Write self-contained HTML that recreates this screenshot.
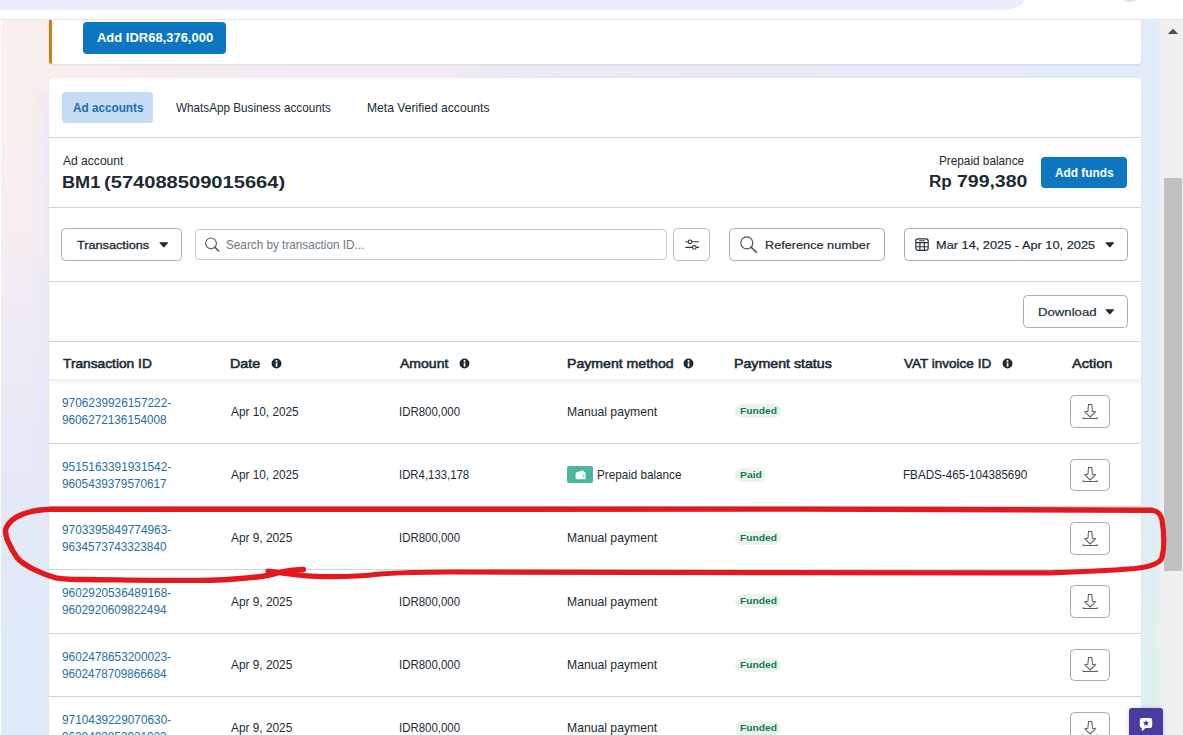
<!DOCTYPE html>
<html>
<head>
<meta charset="utf-8">
<title>Billing</title>
<style>
*{box-sizing:border-box;margin:0;padding:0}
html,body{width:1183px;height:735px;overflow:hidden}
body{font-family:"Liberation Sans",sans-serif;color:#1c2b33;font-size:13px;position:relative;background:#e9eaf7}
.abs{position:absolute}
.t{position:absolute;white-space:nowrap;line-height:1;transform-origin:0 50%}
.line{position:absolute;left:49px;width:1092px;height:1px;background:#d0d4d9}
.btn{position:absolute;border:1px solid #a9afb6;border-radius:4.5px;background:#fff}
.blue{position:absolute;background:#0c77c0;border-radius:4px}
</style>
</head>
<body>
<!-- page background gradients -->
<div class="abs" style="left:0;top:0;width:1183px;height:735px;background:linear-gradient(90deg,#fbefee 0,#faeeef 49px,#f5ecf1 200px,#ebe9f5 600px,#e4eaf8 1000px,#e2ebf9 1141px,#e3ecf9 1183px)"></div>
<div class="abs" style="left:0;top:0;width:49px;height:735px;background:linear-gradient(180deg,#fbefee 0,#fbeeee 14%,#f7eef1 30%,#efebf5 45%,#e8e9f6 58%,#e2e9f7 72%,#dfeaf8 86%,#deeaf8 100%)"></div>
<div class="abs" style="left:30px;top:90px;width:19px;height:400px;background:linear-gradient(90deg,rgba(228,230,247,0),rgba(228,230,247,.55))"></div>
<div class="abs" style="left:1141px;top:0;width:42px;height:735px;background:linear-gradient(180deg,#e2ebf9 0,#e2ebf8 52%,#e0eef3 72%,#dff1ee 90%,#dff1ee 100%)"></div>
<div class="abs" style="left:0;top:0;width:1.2px;height:735px;background:#fff"></div>
<!-- top bar -->
<div class="abs" style="left:0;top:0;width:1183px;height:19px;background:#fff"></div>
<div class="abs" style="left:0;top:0;width:1024px;height:10px;background:#e9edf9;border-bottom-right-radius:26px 10px"></div>
<div class="abs" style="left:1116px;top:-25px;width:27px;height:27px;border-radius:14px;background:#dbe4f5"></div>
<div class="abs" style="left:0;top:19px;width:1183px;height:1px;background:#e3e4e6"></div>

<!-- card 1 -->
<div class="abs" style="left:49px;top:20px;width:1092px;height:44px;background:#fff;border-radius:0 0 4px 4px;box-shadow:0 1px 2px rgba(60,60,90,.10)"></div>
<div class="abs" style="left:49px;top:20px;width:3px;height:44px;background:#cb8016;border-radius:0 0 0 3px"></div>
<div class="blue" style="left:83.2px;top:22px;width:142.5px;height:31.8px"></div>

<!-- card 2 -->
<div class="abs" style="left:49px;top:78px;width:1092px;height:660px;background:#fff;border-radius:4px 4px 0 0;box-shadow:0 0 2px rgba(60,60,90,.08)"></div>

<!-- tabs -->
<div class="abs" style="left:62.2px;top:92px;width:90.6px;height:30.8px;background:#c5dcf4;border-radius:4px"></div>
<div class="line" style="top:137px"></div>

<!-- account header -->
<div class="blue" style="left:1041px;top:157.2px;width:86px;height:30.5px"></div>
<div class="line" style="top:207px"></div>

<!-- filter row -->
<div class="btn" style="left:61.3px;top:228.3px;width:120.4px;height:32.4px"></div>
<svg class="abs" style="left:158.8px;top:242.4px" width="9.6" height="5.8" viewBox="0 0 9 6" preserveAspectRatio="none"><path d="M1 0.3H8Q9 0.3 8.4 1.1L5.1 5.3Q4.500 5.900 3.900 5.300L0.6 1.100Q0 0.300 1 0.300Z" fill="#1c2b33"/></svg>

<div class="btn" style="left:195.2px;top:229.4px;width:471.4px;height:30.3px;border-color:#c6cbd0;border-radius:4px"></div>
<svg class="abs" style="left:203px;top:235.2px" width="18" height="18" viewBox="0 0 18 18"><circle cx="8" cy="8.4" r="5.4" fill="none" stroke="#566067" stroke-width="1.15"/><path d="M12 12.4L15.700 16" stroke="#4a545b" stroke-width="1.5" stroke-linecap="round"/></svg>

<div class="btn" style="left:673.4px;top:228.3px;width:36.3px;height:32.4px;border-color:#b4bbc2"></div>
<svg class="abs" style="left:684px;top:238px" width="16" height="13" viewBox="0 0 16 13"><g stroke="#2a3840" stroke-width="1.1" fill="#fff"><path d="M1.4 3.8h13.5M1.4 9.4h13.5"/><circle cx="6" cy="3.8" r="1.8"/><circle cx="10.3" cy="9.4" r="1.8"/></g></svg>

<div class="btn" style="left:729.2px;top:228.3px;width:155.8px;height:32.4px"></div>
<svg class="abs" style="left:738px;top:234px" width="21" height="21" viewBox="0 0 21 21"><circle cx="8.8" cy="8.9" r="6" fill="none" stroke="#4e5a62" stroke-width="1.25"/><path d="M13.2 13.4L18.4 18.2" stroke="#4e5a62" stroke-width="1.6" stroke-linecap="round"/></svg>

<div class="btn" style="left:904.1px;top:228.3px;width:223.8px;height:32.4px"></div>
<svg class="abs" style="left:914px;top:237px" width="16" height="15" viewBox="0 0 16 15"><g fill="none" stroke="#26343c" stroke-width="1.15"><rect x="1.8" y="1.9" width="12.4" height="11.4" rx="2.2"/><path d="M1.8 5.6h12.4M1.8 9.7h12.4M5.9 5.6v7.7M10.3 5.6v7.7M5.2 3.7h5.6"/></g></svg>
<svg class="abs" style="left:1105.1px;top:242.2px" width="9.6" height="5.8" viewBox="0 0 9 6" preserveAspectRatio="none"><path d="M1 0.3H8Q9 0.3 8.4 1.1L5.1 5.3Q4.500 5.900 3.900 5.300L0.6 1.100Q0 0.300 1 0.300Z" fill="#1c2b33"/></svg>
<div class="line" style="top:281px"></div>

<!-- download row -->
<div class="btn" style="left:1023.2px;top:295px;width:104.4px;height:32.6px"></div>
<svg class="abs" style="left:1105.2px;top:309.2px" width="9.6" height="5.8" viewBox="0 0 9 6" preserveAspectRatio="none"><path d="M1 0.3H8Q9 0.3 8.4 1.1L5.1 5.3Q4.500 5.900 3.900 5.300L0.6 1.100Q0 0.300 1 0.300Z" fill="#1c2b33"/></svg>
<div class="line" style="top:341px"></div>

<!-- table header shadow -->
<div class="abs" style="left:49px;top:379px;width:1092px;height:6px;background:linear-gradient(180deg,rgba(0,0,0,.07),rgba(0,0,0,0))"></div>
<!-- info icons -->
<svg class="abs" style="left:271.1px;top:357.9px" width="11" height="11" viewBox="0 0 11 11"><circle cx="5.5" cy="5.5" r="4.95" fill="#1c2b33"/><rect x="4.7" y="4.6" width="1.7" height="4" fill="#fff"/><circle cx="5.5" cy="2.9" r="1" fill="#fff"/></svg>
<svg class="abs" style="left:459.3px;top:357.9px" width="11" height="11" viewBox="0 0 11 11"><circle cx="5.5" cy="5.5" r="4.95" fill="#1c2b33"/><rect x="4.7" y="4.6" width="1.7" height="4" fill="#fff"/><circle cx="5.5" cy="2.9" r="1" fill="#fff"/></svg>
<svg class="abs" style="left:683.3px;top:357.9px" width="11" height="11" viewBox="0 0 11 11"><circle cx="5.5" cy="5.5" r="4.95" fill="#1c2b33"/><rect x="4.7" y="4.6" width="1.7" height="4" fill="#fff"/><circle cx="5.5" cy="2.9" r="1" fill="#fff"/></svg>
<svg class="abs" style="left:1001.7px;top:357.9px" width="11" height="11" viewBox="0 0 11 11"><circle cx="5.5" cy="5.5" r="4.95" fill="#1c2b33"/><rect x="4.7" y="4.6" width="1.7" height="4" fill="#fff"/><circle cx="5.5" cy="2.9" r="1" fill="#fff"/></svg>

<div class="abs" style="left:735px;top:404.40px;width:46.3px;height:14px;border-radius:7px;background:#ebf4ea"></div>
<div class="btn" style="left:1070.2px;top:395.40px;width:39.6px;height:32.6px;border-color:#a4abb2;border-radius:4.5px"></div>
<svg class="abs" style="left:1082px;top:403.00px" width="16" height="17" viewBox="0 0 16 17"><g fill="none" stroke="#555f67" stroke-width="1.05" stroke-linejoin="miter"><path d="M6.5 1.4H9.8L10.400 8.200L13.500 8.800L8.150 14L2.800 8.800L5.900 8.200Z"/><path d="M1.100 14.200V15.400H15.200V14.200"/></g></svg>
<div class="abs" style="left:567.1px;top:466.03px;width:25.7px;height:16.7px;border-radius:2px;background:#49b7a0"></div>
<svg class="abs" style="left:574.5px;top:469.83px" width="12" height="10" viewBox="0 0 12 10"><path d="M1.6 2.2 L7.6 0.4 Q8.6 0.2 8.6 1.2 V2 H9.6 Q10.6 2 10.6 3 V8.2 Q10.6 9.2 9.6 9.2 H1.6 Q0.6 9.2 0.6 8.2 V3.2 Q0.6 2.4 1.6 2.2Z" fill="#f4fffb"/><circle cx="8.500" cy="5.600" r="0.800" fill="#49b7a0"/></svg>
<div class="abs" style="left:735px;top:467.73px;width:30.5px;height:14px;border-radius:7px;background:#ebf4ea"></div>
<div class="btn" style="left:1070.2px;top:458.73px;width:39.6px;height:32.6px;border-color:#a4abb2;border-radius:4.5px"></div>
<svg class="abs" style="left:1082px;top:466.33px" width="16" height="17" viewBox="0 0 16 17"><g fill="none" stroke="#555f67" stroke-width="1.05" stroke-linejoin="miter"><path d="M6.5 1.4H9.8L10.400 8.200L13.500 8.800L8.150 14L2.800 8.800L5.900 8.200Z"/><path d="M1.100 14.200V15.400H15.200V14.200"/></g></svg>
<div class="line" style="top:442.83px"></div>
<div class="abs" style="left:735px;top:531.06px;width:46.3px;height:14px;border-radius:7px;background:#ebf4ea"></div>
<div class="btn" style="left:1070.2px;top:522.06px;width:39.6px;height:32.6px;border-color:#a4abb2;border-radius:4.5px"></div>
<svg class="abs" style="left:1082px;top:529.66px" width="16" height="17" viewBox="0 0 16 17"><g fill="none" stroke="#555f67" stroke-width="1.05" stroke-linejoin="miter"><path d="M6.5 1.4H9.8L10.400 8.200L13.500 8.800L8.150 14L2.800 8.800L5.900 8.200Z"/><path d="M1.100 14.200V15.400H15.200V14.200"/></g></svg>
<div class="line" style="top:506.16px"></div>
<div class="abs" style="left:735px;top:594.39px;width:46.3px;height:14px;border-radius:7px;background:#ebf4ea"></div>
<div class="btn" style="left:1070.2px;top:585.39px;width:39.6px;height:32.6px;border-color:#a4abb2;border-radius:4.5px"></div>
<svg class="abs" style="left:1082px;top:592.99px" width="16" height="17" viewBox="0 0 16 17"><g fill="none" stroke="#555f67" stroke-width="1.05" stroke-linejoin="miter"><path d="M6.5 1.4H9.8L10.400 8.200L13.500 8.800L8.150 14L2.800 8.800L5.900 8.200Z"/><path d="M1.100 14.200V15.400H15.200V14.200"/></g></svg>
<div class="line" style="top:569.49px"></div>
<div class="abs" style="left:735px;top:657.72px;width:46.3px;height:14px;border-radius:7px;background:#ebf4ea"></div>
<div class="btn" style="left:1070.2px;top:648.72px;width:39.6px;height:32.6px;border-color:#a4abb2;border-radius:4.5px"></div>
<svg class="abs" style="left:1082px;top:656.32px" width="16" height="17" viewBox="0 0 16 17"><g fill="none" stroke="#555f67" stroke-width="1.05" stroke-linejoin="miter"><path d="M6.5 1.4H9.8L10.400 8.200L13.500 8.800L8.150 14L2.800 8.800L5.900 8.200Z"/><path d="M1.100 14.200V15.400H15.200V14.200"/></g></svg>
<div class="line" style="top:632.82px"></div>
<div class="abs" style="left:735px;top:721.05px;width:46.3px;height:14px;border-radius:7px;background:#ebf4ea"></div>
<div class="btn" style="left:1070.2px;top:712.05px;width:39.6px;height:32.6px;border-color:#a4abb2;border-radius:4.5px"></div>
<svg class="abs" style="left:1082px;top:719.65px" width="16" height="17" viewBox="0 0 16 17"><g fill="none" stroke="#555f67" stroke-width="1.05" stroke-linejoin="miter"><path d="M6.5 1.4H9.8L10.400 8.200L13.500 8.800L8.150 14L2.800 8.800L5.900 8.200Z"/><path d="M1.100 14.200V15.400H15.200V14.200"/></g></svg>
<div class="line" style="top:696.15px"></div>

<div class="t" style="left:96.90px;top:31.64px;font-size:12px;transform:scaleX(1.0814);font-weight:bold;color:#fff">Add IDR68,376,000</div>
<div class="t" style="left:72.82px;top:100.80px;font-size:13px;transform:scaleX(0.9032);font-weight:bold;color:#1a6fb4">Ad accounts</div>
<div class="t" style="left:175.90px;top:101.30px;font-size:13px;transform:scaleX(0.8999)">WhatsApp Business accounts</div>
<div class="t" style="left:367.15px;top:101.30px;font-size:13px;transform:scaleX(0.9316)">Meta Verified accounts</div>
<div class="t" style="left:62.60px;top:154.00px;font-size:13px;transform:scaleX(0.9280)">Ad account</div>
<div class="t" style="left:62.27px;top:174.56px;font-size:16px;transform:scaleX(1.1333);font-weight:bold">BM1</div>
<div class="t" style="left:103.56px;top:174.56px;font-size:16px;transform:scaleX(1.2570);font-weight:bold">(574088509015664)</div>
<div class="t" style="left:938.58px;top:153.90px;font-size:13px;transform:scaleX(0.9057)">Prepaid balance</div>
<div class="t" style="left:929.13px;top:174.16px;font-size:16px;transform:scaleX(1.0705);font-weight:bold">Rp</div>
<div class="t" style="left:956.89px;top:174.16px;font-size:16px;transform:scaleX(1.2154);font-weight:bold">799,380</div>
<div class="t" style="left:1055.11px;top:166.74px;font-size:12px;transform:scaleX(0.9873);font-weight:bold;color:#fff">Add funds</div>
<div class="t" style="left:76.98px;top:239.10px;font-size:11.7px;transform:scaleX(1.0857);-webkit-text-stroke:0.32px #1c2b33">Transactions</div>
<div class="t" style="left:225.93px;top:238.00px;font-size:13px;transform:scaleX(0.9030);color:#6d7982">Search by transaction ID...</div>
<div class="t" style="left:764.72px;top:239.97px;font-size:11.5px;transform:scaleX(1.1038);-webkit-text-stroke:0.2px #1c2b33">Reference number</div>
<div class="t" style="left:935.81px;top:239.97px;font-size:11.5px;transform:scaleX(1.1109);-webkit-text-stroke:0.2px #1c2b33">Mar 14, 2025 - Apr 10, 2025</div>
<div class="t" style="left:1037.79px;top:306.67px;font-size:11.5px;transform:scaleX(1.1446);-webkit-text-stroke:0.2px #1c2b33">Download</div>
<div class="t" style="left:63.48px;top:356.80px;font-size:13px;transform:scaleX(1.0566);-webkit-text-stroke:0.55px #1c2b33">Transaction ID</div>
<div class="t" style="left:230.49px;top:356.80px;font-size:13px;transform:scaleX(1.0995);-webkit-text-stroke:0.55px #1c2b33">Date</div>
<div class="t" style="left:399.60px;top:356.80px;font-size:13px;transform:scaleX(1.0794);-webkit-text-stroke:0.55px #1c2b33">Amount</div>
<div class="t" style="left:566.90px;top:356.80px;font-size:13px;transform:scaleX(1.0847);-webkit-text-stroke:0.55px #1c2b33">Payment method</div>
<div class="t" style="left:734.49px;top:356.80px;font-size:13px;transform:scaleX(1.0910);-webkit-text-stroke:0.55px #1c2b33">Payment status</div>
<div class="t" style="left:903.89px;top:356.80px;font-size:13px;transform:scaleX(1.0399);-webkit-text-stroke:0.55px #1c2b33">VAT invoice ID</div>
<div class="t" style="left:1072.11px;top:356.80px;font-size:13px;transform:scaleX(1.1182);-webkit-text-stroke:0.55px #1c2b33">Action</div>
<div class="t" style="left:62.45px;top:396.30px;font-size:13px;transform:scaleX(0.9098);color:#266e9f">9706239926157222-</div>
<div class="t" style="left:62.45px;top:413.30px;font-size:13px;transform:scaleX(0.9045);color:#266e9f">9606272136154008</div>
<div class="t" style="left:230.80px;top:404.80px;font-size:13px;transform:scaleX(0.9091)">Apr 10, 2025</div>
<div class="t" style="left:398.61px;top:404.80px;font-size:13px;transform:scaleX(0.8804)">IDR800,000</div>
<div class="t" style="left:566.75px;top:404.80px;font-size:13px;transform:scaleX(0.9376)">Manual payment</div>
<div class="t" style="left:739.96px;top:406.46px;font-size:9.5px;transform:scaleX(1.0756);font-weight:bold;color:#0d7a55">Funded</div>
<div class="t" style="left:62.45px;top:459.63px;font-size:13px;transform:scaleX(0.9098);color:#266e9f">9515163391931542-</div>
<div class="t" style="left:62.45px;top:476.63px;font-size:13px;transform:scaleX(0.9045);color:#266e9f">9605439379570617</div>
<div class="t" style="left:230.80px;top:468.13px;font-size:13px;transform:scaleX(0.9091)">Apr 10, 2025</div>
<div class="t" style="left:398.61px;top:468.13px;font-size:13px;transform:scaleX(0.8744)">IDR4,133,178</div>
<div class="t" style="left:596.89px;top:468.13px;font-size:13px;transform:scaleX(0.8981)">Prepaid balance</div>
<div class="t" style="left:739.95px;top:469.79px;font-size:9.5px;transform:scaleX(1.0922);font-weight:bold;color:#0d7a55">Paid</div>
<div class="t" style="left:902.69px;top:468.13px;font-size:13px;transform:scaleX(0.8958)">FBADS-465-104385690</div>
<div class="t" style="left:62.45px;top:522.96px;font-size:13px;transform:scaleX(0.9098);color:#266e9f">9703395849774963-</div>
<div class="t" style="left:62.45px;top:539.96px;font-size:13px;transform:scaleX(0.9029);color:#266e9f">9634573743323840</div>
<div class="t" style="left:230.80px;top:531.46px;font-size:13px;transform:scaleX(0.9117)">Apr 9, 2025</div>
<div class="t" style="left:398.61px;top:531.46px;font-size:13px;transform:scaleX(0.8804)">IDR800,000</div>
<div class="t" style="left:566.75px;top:531.46px;font-size:13px;transform:scaleX(0.9376)">Manual payment</div>
<div class="t" style="left:739.96px;top:533.12px;font-size:9.5px;transform:scaleX(1.0756);font-weight:bold;color:#0d7a55">Funded</div>
<div class="t" style="left:62.45px;top:586.29px;font-size:13px;transform:scaleX(0.9098);color:#266e9f">9602920536489168-</div>
<div class="t" style="left:62.45px;top:603.29px;font-size:13px;transform:scaleX(0.9029);color:#266e9f">9602920609822494</div>
<div class="t" style="left:230.80px;top:594.79px;font-size:13px;transform:scaleX(0.9117)">Apr 9, 2025</div>
<div class="t" style="left:398.61px;top:594.79px;font-size:13px;transform:scaleX(0.8804)">IDR800,000</div>
<div class="t" style="left:566.75px;top:594.79px;font-size:13px;transform:scaleX(0.9376)">Manual payment</div>
<div class="t" style="left:739.96px;top:596.45px;font-size:9.5px;transform:scaleX(1.0756);font-weight:bold;color:#0d7a55">Funded</div>
<div class="t" style="left:62.45px;top:649.62px;font-size:13px;transform:scaleX(0.9098);color:#266e9f">9602478653200023-</div>
<div class="t" style="left:62.45px;top:666.62px;font-size:13px;transform:scaleX(0.9029);color:#266e9f">9602478709866684</div>
<div class="t" style="left:230.80px;top:658.12px;font-size:13px;transform:scaleX(0.9117)">Apr 9, 2025</div>
<div class="t" style="left:398.61px;top:658.12px;font-size:13px;transform:scaleX(0.8804)">IDR800,000</div>
<div class="t" style="left:566.75px;top:658.12px;font-size:13px;transform:scaleX(0.9376)">Manual payment</div>
<div class="t" style="left:739.96px;top:659.78px;font-size:9.5px;transform:scaleX(1.0756);font-weight:bold;color:#0d7a55">Funded</div>
<div class="t" style="left:62.45px;top:712.95px;font-size:13px;transform:scaleX(0.9098);color:#266e9f">9710439229070630-</div>
<div class="t" style="left:62.45px;top:729.95px;font-size:13px;transform:scaleX(0.9045);color:#266e9f">9628493852931922</div>
<div class="t" style="left:230.80px;top:721.45px;font-size:13px;transform:scaleX(0.9117)">Apr 9, 2025</div>
<div class="t" style="left:398.61px;top:721.45px;font-size:13px;transform:scaleX(0.8804)">IDR800,000</div>
<div class="t" style="left:566.75px;top:721.45px;font-size:13px;transform:scaleX(0.9376)">Manual payment</div>
<div class="t" style="left:739.96px;top:723.11px;font-size:9.5px;transform:scaleX(1.0756);font-weight:bold;color:#0d7a55">Funded</div>

<!-- scrollbar -->
<div class="abs" style="left:1156px;top:20px;width:6px;height:715px;background:linear-gradient(90deg,rgba(240,240,240,0),rgba(240,240,240,.9))"></div>
<div class="abs" style="left:1161.3px;top:20px;width:21.7px;height:715px;background:#f0f0f0"></div>
<div class="abs" style="left:1164.3px;top:178px;width:17.5px;height:392.6px;background:#c1c1c1"></div>
<svg class="abs" style="left:1167px;top:28px" width="12" height="7" viewBox="0 0 12 7"><path d="M0.8 5.9L6 0.7l5.2 5.2z" fill="#505050"/></svg>

<!-- chat widget -->
<div class="abs" style="left:1129.2px;top:708.3px;width:33.8px;height:30px;background:#4a3b9f;border-radius:3px 3px 0 0;box-shadow:0 0 4px rgba(74,59,159,.25)"></div>
<svg class="abs" style="left:1139px;top:717px" width="14" height="15" viewBox="0 0 14 15"><path d="M3 1H11Q13.200 1 13.200 3.200V8.800Q13.200 11 11 11H6.600L3.500 13.700Q2.800 14.200 2.800 13.400V11Q0.800 10.800 0.800 8.800V3.200Q0.800 1 3 1Z" fill="#fff"/><path d="M7 3L7.900 4.900L10 5.200L8.500 6.700L8.850 8.800L7 7.800L5.150 8.800L5.500 6.700L4 5.200L6.100 4.900Z" fill="#4a3b9f"/></svg>

<!-- red annotation -->
<svg class="abs" style="left:0;top:495px" width="1183" height="100" viewBox="0 495 1183 100">
<g fill="none" stroke="#e3191e" stroke-linecap="round" stroke-linejoin="round">
<path stroke-width="5.2" d="M1152 510.200 C1157 511 1160.500 513 1162 520 C1164 532 1164.300 548 1162 557.600 C1160 563 1152 566.500 1135 568.500 C1110 570.500 1080 572 1050 572.800 C900 573.300 600 572 450 572 C420 572 400 572.600 380 574 C360 576.300 330 576.800 315 576.300 C300 575.800 285 573.500 268 571"/>
<path stroke-width="5.4" d="M1152 510.200 C1120 509.300 1000 509.200 800 509.100 C500 509 200 509.100 50.700 509.300 C35 509.800 20 513.500 11.800 520.400 C6.500 525 5.200 530 5.600 532 C6 536 6.500 538 7.600 540.600 C10 546 13 552 17 557.600 C21 562 27 566 33.800 569.400 C40 572.500 48 575.800 55.800 577.800 C64 579.300 74 579.500 84.500 579.500 C120 579.800 160 580.600 200 580.400 C215 580.300 225 579.800 230.700 579.300 C245 578.300 255 577.300 264.500 576 C272 574.800 277 573.400 281.400 572 C290 570.300 298 569.700 303.400 569.500"/>
</g>
</svg>
</body>
</html>
